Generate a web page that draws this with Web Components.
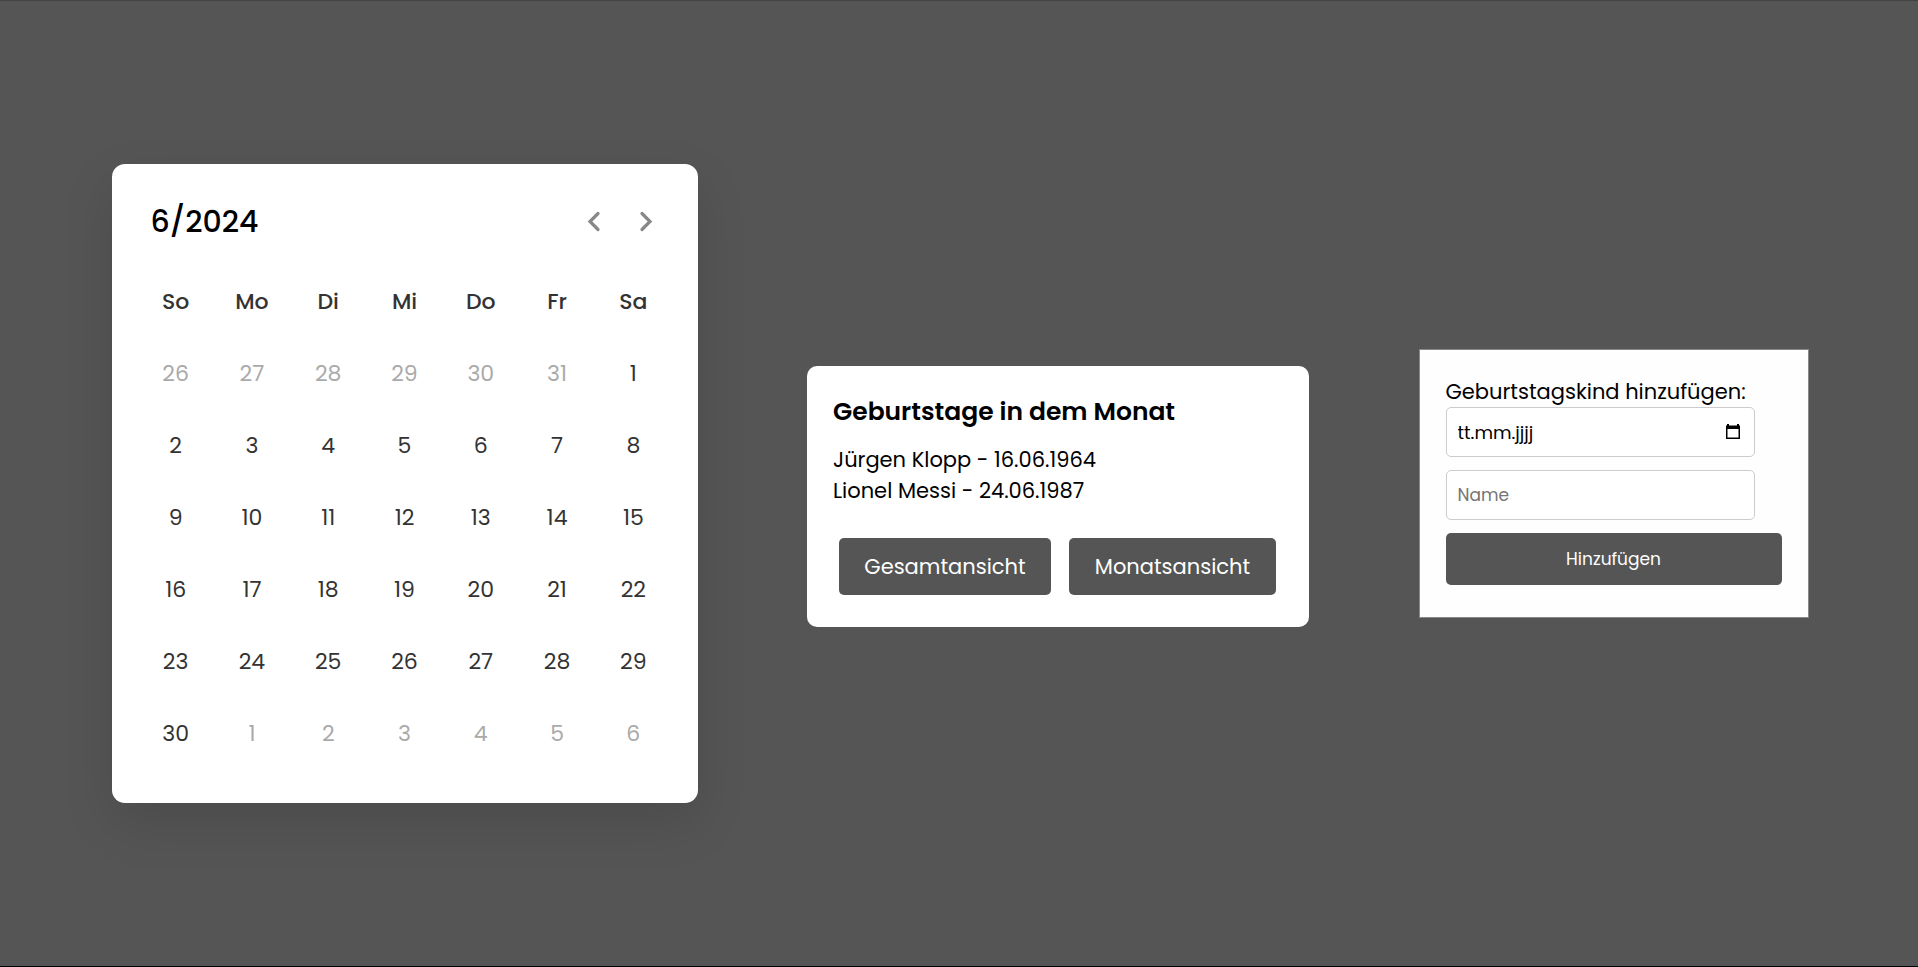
<!DOCTYPE html>
<html lang="de">
<head>
<meta charset="utf-8">
<meta name="viewport" content="width=device-width, initial-scale=1">
<title>Geburtstagskalender</title>
<style>
  * { box-sizing: border-box; }
  body {
    margin: 0;
    min-height: 100vh;
    padding-left: 2px;
    background: #555;
    border-top: 1px solid #444;
    border-bottom: 1px solid #000;
    font-family: Poppins, Inter, sans-serif;
    display: flex;
    align-items: center;
  }
  birthday-app { flex: 1; }
</style>
</head>
<body>
<birthday-app></birthday-app>

<template id="app-template">
  <style>
    :host { display: block; }
    main {
      display: flex;
      flex-wrap: wrap;
      justify-content: space-evenly;
      align-items: center;
      row-gap: 40px;
    }
    birthday-list { margin-top: 26px; }
  </style>
  <main>
    <month-calendar year="2024" month="6"></month-calendar>
    <birthday-list>
      <span slot="title">Geburtstage in dem Monat</span>
      <li>Jürgen Klopp - 16.06.1964</li>
      <li>Lionel Messi - 24.06.1987</li>
    </birthday-list>
    <birthday-form></birthday-form>
  </main>
</template>

<template id="calendar-template">
  <style>
    * { box-sizing: border-box; }
    :host {
      display: block;
      box-sizing: border-box;
      width: 586px;
      max-width: 100%;
      padding: 26px 26px 33px;
      background: #fff;
      border-radius: 13px;
      box-shadow: 0 20px 52px rgba(0, 0, 0, 0.12);
    }
    header {
      display: flex;
      align-items: center;
      justify-content: space-between;
      height: 62px;
      padding-left: 13px;
      margin-bottom: 14px;
    }
    h2 { margin: 0; font-size: 30px; font-weight: 500; line-height: 45px; }
    nav { display: flex; }
    button {
      width: 52px;
      height: 52px;
      padding: 0;
      border: 0;
      border-radius: 50%;
      background: none;
      color: #878787;
      cursor: pointer;
    }
    button:hover { background: #f2f2f2; }
    svg { display: block; margin: auto; }
    table {
      width: 100%;
      table-layout: fixed;
      border-collapse: collapse;
      font-size: 22px;
      line-height: 32px;
      color: #333;
    }
    th, td { height: 72px; padding: 0; text-align: center; }
    th { font-weight: 500; }
    .inactive { color: #aaa; }
  </style>
  <header>
    <h2></h2>
    <nav aria-label="Monat wechseln">
      <button type="button" data-step="-1" aria-label="Vorheriger Monat"><svg width="24" height="24" viewBox="0 0 24 24" fill="none" stroke="currentColor" stroke-width="3.2" stroke-linecap="round"><path d="M16 4.500L8 12.500L16 20.500"/></svg></button>
      <button type="button" data-step="1" aria-label="Nächster Monat"><svg width="24" height="24" viewBox="0 0 24 24" fill="none" stroke="currentColor" stroke-width="3.2" stroke-linecap="round"><path d="M8 4.500L16 12.500L8 20.500"/></svg></button>
    </nav>
  </header>
  <table>
    <thead><tr><th>So</th><th>Mo</th><th>Di</th><th>Mi</th><th>Do</th><th>Fr</th><th>Sa</th></tr></thead>
    <tbody></tbody>
  </table>
</template>

<template id="list-template">
  <style>
    * { box-sizing: border-box; }
    :host {
      display: block;
      box-sizing: border-box;
      width: 502px;
      max-width: 100%;
      padding: 26px;
      background: #fff;
      border-radius: 10px;
    }
    h2 { margin: 0 0 13px; font-size: 25px; font-weight: 600; line-height: 39px; }
    ul { margin: 0; padding: 0; list-style: none; font-size: 21px; line-height: 31px; }
    .actions { display: flex; gap: 18px; padding: 32px 6px 6px; }
    button {
      flex: 0 1 212px;
      height: 57px;
      padding: 0;
      border: 0;
      border-radius: 5px;
      background: #555;
      color: #fff;
      font: inherit;
      font-size: 21px;
      cursor: pointer;
    }
    button + button { flex-basis: 207px; }
  </style>
  <h2><slot name="title"></slot></h2>
  <ul><slot></slot></ul>
  <div class="actions">
    <button type="button">Gesamtansicht</button>
    <button type="button">Monatsansicht</button>
  </div>
</template>

<template id="form-template">
  <style>
    * { box-sizing: border-box; }
    :host {
      display: block;
      box-sizing: border-box;
      width: 390px;
      max-width: 100%;
      padding: 26px 26px 32px;
      background: #fefefe;
      border: 1px solid #888;
    }
    form { display: flex; flex-direction: column; }
    label { font-size: 21px; line-height: 31px; }
    .field {
      display: flex;
      align-items: center;
      width: 92%;
      height: 50px;
      margin-bottom: 13px;
      padding: 0 11px;
      border: 1px solid #ccc;
      border-radius: 5px;
      background: #fff;
    }
    input {
      flex: 1;
      min-width: 0;
      padding: 0;
      border: 0;
      outline: 0;
      background: none;
      font: inherit;
      font-size: 17px;
      line-height: 27px;
      color: #000;
    }
    input::placeholder { color: #757575; }
    #date { font-size: 18px; }
    #date::placeholder { color: #000; }
    .picker { display: flex; padding: 0; border: 0; background: none; color: #000; cursor: pointer; }
    .submit {
      height: 52px;
      padding: 0;
      border: 0;
      border-radius: 5px;
      background: #555;
      color: #fff;
      font: inherit;
      font-size: 17px;
      cursor: pointer;
    }
  </style>
  <form>
    <label for="date">Geburtstagskind hinzufügen:</label>
    <div class="field">
      <input id="date" type="text" inputmode="numeric" placeholder="tt.mm.jjjj">
      <button class="picker" type="button" aria-label="Datum auswählen"><svg width="20" height="20" viewBox="0 0 20 20"><path fill="currentColor" fill-rule="evenodd" d="M4 2H6V3.500H14V2H16V3.500H17V17H3V3.500H4ZM4.500 7V15.500H15.500V7Z"/></svg></button>
    </div>
    <div class="field"><input type="text" placeholder="Name" aria-label="Name"></div>
    <button class="submit" type="button">Hinzufügen</button>
  </form>
</template>

<script>
  class TemplateElement extends HTMLElement {
    constructor() {
      super();
      const template = document.getElementById(this.constructor.template);
      this.attachShadow({ mode: 'open' }).append(template.content.cloneNode(true));
    }
  }

  class MonthCalendar extends TemplateElement {
    static template = 'calendar-template';

    connectedCallback() {
      this.current = new Date(Number(this.getAttribute('year')), Number(this.getAttribute('month')) - 1, 1);
      for (const button of this.shadowRoot.querySelectorAll('button')) {
        button.onclick = () => {
          this.current.setMonth(this.current.getMonth() + Number(button.dataset.step));
          this.render();
        };
      }
      this.render();
    }

    render() {
      const year = this.current.getFullYear();
      const month = this.current.getMonth();
      this.shadowRoot.querySelector('h2').textContent = `${month + 1}/${year}`;
      const body = this.shadowRoot.querySelector('tbody');
      body.replaceChildren();
      // Weeks start on Sunday; leading and trailing days belong to the neighbouring months.
      const day = new Date(year, month, 1 - this.current.getDay());
      const last = new Date(year, month + 1, 0);
      while (day <= last) {
        const row = body.insertRow();
        for (let i = 0; i < 7; i++) {
          const cell = row.insertCell();
          cell.textContent = day.getDate();
          cell.classList.toggle('inactive', day.getMonth() !== month);
          day.setDate(day.getDate() + 1);
        }
      }
    }
  }

  class BirthdayList extends TemplateElement { static template = 'list-template'; }
  class BirthdayForm extends TemplateElement { static template = 'form-template'; }
  class BirthdayApp extends TemplateElement { static template = 'app-template'; }

  customElements.define('month-calendar', MonthCalendar);
  customElements.define('birthday-list', BirthdayList);
  customElements.define('birthday-form', BirthdayForm);
  customElements.define('birthday-app', BirthdayApp);
</script>
</body>
</html>
